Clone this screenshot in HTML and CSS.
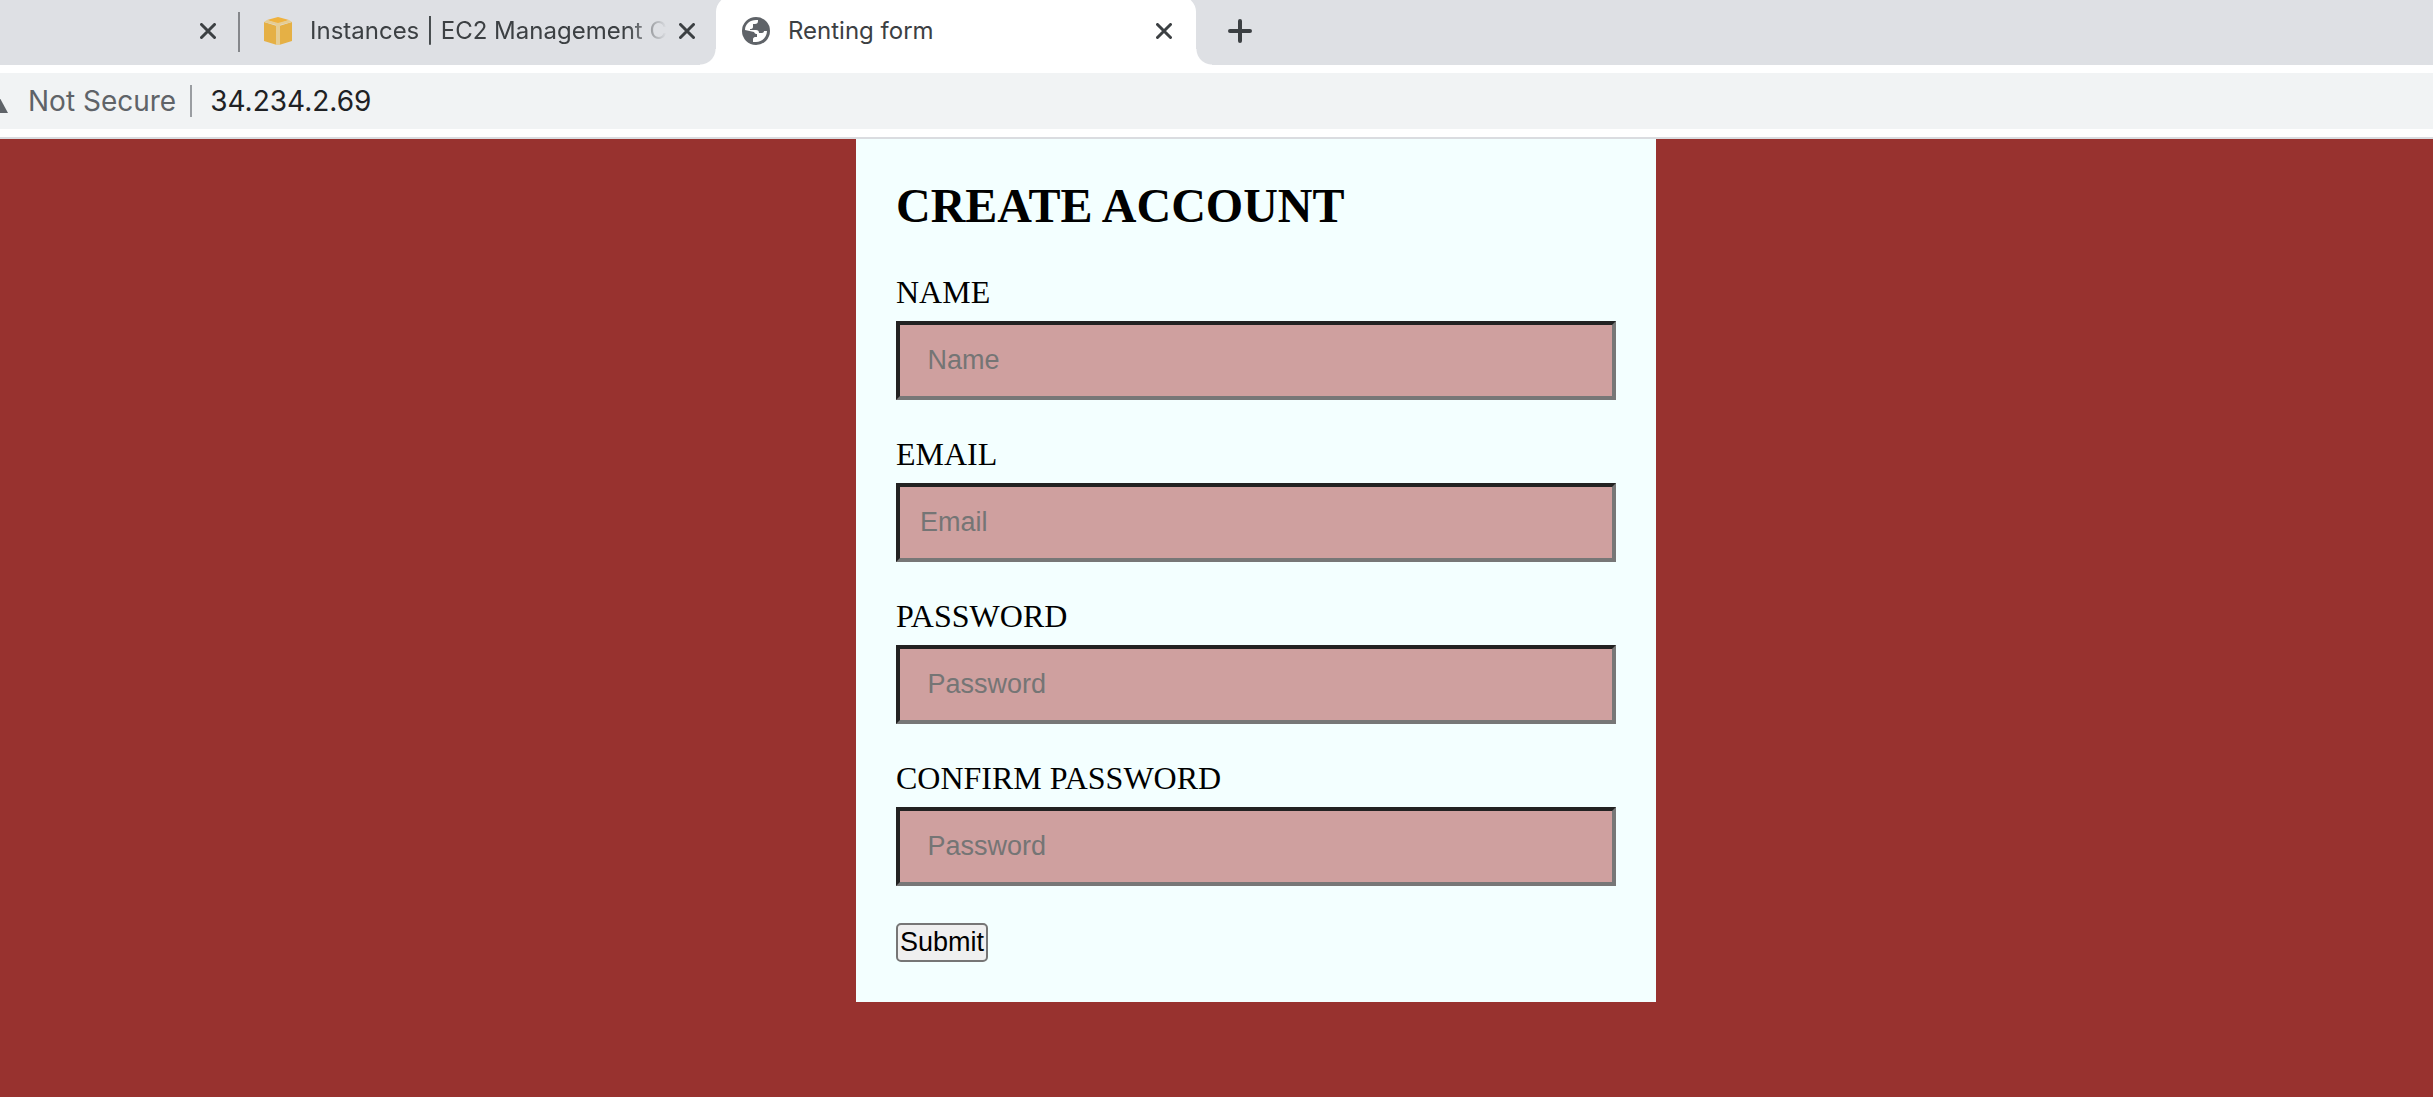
FILE: index.html
```html
<!DOCTYPE html>
<html lang="en">
<head>
<meta charset="utf-8">
<title>Renting form</title>
<link rel="stylesheet" href="styles.css">
</head>
<body>
<header class="browser">
  <nav class="tabs" aria-label="Tabs">
    <div class="tab tab-cut">
      <button class="icon-button" type="button" aria-label="Close tab"><svg class="close" viewBox="0 0 16 16"><path d="M1.5 1.5l13 13M14.5 1.5l-13 13"/></svg></button>
    </div>
    <div class="tab tab-divided">
      <svg class="favicon" viewBox="0 0 28 28"><path fill="#efb23e" d="M14 0l11 3-11 4L3 3z"/><path fill="#e5b045" d="M0 5l13 4v19L0 24zM28 5L15 9v19l13-4z"/><path fill="#e6cd93" d="M0 5l3-2 11 3 11-3 3 2-12 3v20h-4V8z"/></svg>
      <span class="tab-title tab-title-fade">Instances | EC2 Management C</span>
      <button class="icon-button" type="button" aria-label="Close tab"><svg class="close" viewBox="0 0 16 16"><path d="M1.5 1.5l13 13M14.5 1.5l-13 13"/></svg></button>
    </div>
    <div class="tab tab-active">
      <svg class="favicon" viewBox="0 0 28 28"><circle cx="14" cy="14" r="14" fill="#5f6368"/><path fill="#fff" d="M3 13C3 7 8 3 14 3h2v1c0 2-1 3-3 3h-2v3c0 1-1 2-2 2H8v1h6c2 0 3 1 3 3h3c1 0 2-1 2-2h3c0 6-5 11-11 11h-3v-3c0-1 1-2 2-2h2v-3c-1 0-2 0-3-2z"/></svg>
      <span class="tab-title">Renting form</span>
      <button class="icon-button" type="button" aria-label="Close tab"><svg class="close" viewBox="0 0 16 16"><path d="M1.5 1.5l13 13M14.5 1.5l-13 13"/></svg></button>
    </div>
    <button class="icon-button new-tab" type="button" aria-label="New tab"><svg class="plus" viewBox="0 0 24 24"><path d="M12 2v20M2 12h20"/></svg></button>
  </nav>
  <div class="toolbar">
    <div class="address">
      <svg class="warning" viewBox="0 0 8 28"><path d="M-5 2L8 26H-18z" fill="#5f6368"/></svg>
      <span class="security">Not Secure</span>
      <input class="url" type="text" aria-label="Address" value="34.234.2.69">
    </div>
  </div>
</header>
<main class="page">
  <form class="card">
    <h1 class="title">CREATE ACCOUNT</h1>
    <div class="field">
      <label class="label" for="name">NAME</label>
      <input class="box" id="name" type="text" placeholder="&nbsp;Name">
    </div>
    <div class="field">
      <label class="label" for="email">EMAIL</label>
      <input class="box" id="email" type="email" placeholder="Email">
    </div>
    <div class="field">
      <label class="label" for="password">PASSWORD</label>
      <input class="box" id="password" type="password" placeholder="&nbsp;Password">
    </div>
    <div class="field">
      <label class="label" for="confirm">CONFIRM PASSWORD</label>
      <input class="box" id="confirm" type="password" placeholder="&nbsp;Password">
    </div>
    <button class="submit" type="submit">Submit</button>
  </form>
</main>
</body>
</html>
```
FILE: styles.css
```css
* {
  box-sizing: border-box;
}

body {
  margin: 0;
  min-height: 100vh;
  background: #98322f;
  font-family: "Liberation Serif", serif;
  color: #000;
}

/* Browser window */
.browser {
  background: #fff;
  border-bottom: 2px solid #dadce0;
  font-family: Inter, sans-serif;
}

.tabs {
  display: flex;
  height: 65px;
  overflow: hidden;
  background: #dee0e4;
}

.tab {
  display: flex;
  align-items: center;
  flex: none;
  padding-bottom: 3px;
  color: #3c4043;
}

.tab-cut {
  width: 238px;
  justify-content: flex-end;
  padding-right: 22px;
}

.tab-divided {
  width: 478px;
  padding-left: 26px;
  padding-right: 22px;
  background: linear-gradient(#85878b, #85878b) no-repeat 0 12px / 2px 40px;
}

.tab-active {
  position: relative;
  width: 480px;
  margin-top: -4px;
  padding: 4px 24px 3px 26px;
  border-radius: 16px 16px 0 0;
  background: #fff;
}

/* Flared feet of the selected tab */
.tab-active::before,
.tab-active::after {
  content: "";
  position: absolute;
  bottom: 0;
  width: 16px;
  height: 16px;
}

.tab-active::before {
  right: 100%;
  background: radial-gradient(circle at 0 0, transparent 15px, #fff 16px);
}

.tab-active::after {
  left: 100%;
  background: radial-gradient(circle at 100% 0, transparent 15px, #fff 16px);
}

.favicon {
  flex: none;
  width: 28px;
  height: 28px;
}

.tab-title {
  flex: 1;
  margin: 0 12px 0 18px;
  white-space: nowrap;
  font-size: 24px;
  line-height: 32px;
}

.tab-title-fade {
  -webkit-mask-image: linear-gradient(to left, transparent, #000 40px);
  mask-image: linear-gradient(to left, transparent, #000 40px);
}

.icon-button {
  display: flex;
  flex: none;
  padding: 0;
  border: 0;
  background: none;
}

.close {
  width: 16px;
  height: 16px;
  fill: none;
  stroke: #3c4043;
  stroke-width: 3;
  stroke-linecap: round;
}

.new-tab {
  align-items: center;
  margin-left: 32px;
  padding-bottom: 3px;
}

.plus {
  width: 24px;
  height: 24px;
  fill: none;
  stroke: #3c4043;
  stroke-width: 4;
  stroke-linecap: round;
}

.toolbar {
  padding: 8px 0;
}

.address {
  display: flex;
  align-items: center;
  height: 56px;
  background: #f1f3f4;
  font-size: 28px;
  line-height: 32px;
}

.warning {
  width: 8px;
  height: 28px;
  margin-right: 20px;
}

.security {
  padding-right: 14px;
  color: #5f6368;
}

.url {
  flex: 1;
  height: 32px;
  padding: 0 0 0 18px;
  border: 0;
  border-left: 2px solid #9a9da1;
  background: none;
  font: inherit;
  color: #202124;
}

/* Page; the left part of the window lies beyond the edge */
.page {
  padding-left: 79px;
}

.card {
  max-width: 800px;
  margin: 0 auto;
  padding: 40px;
  background: #f3ffff;
}

.title {
  margin: 0 0 42px;
  font-size: 48px;
  line-height: 54px;
}

.field {
  margin-bottom: 37px;
}

.label {
  display: block;
  margin-bottom: 12px;
  font-size: 32px;
  line-height: 34px;
}

.box {
  display: block;
  width: 100%;
  height: 79px;
  padding: 20px;
  border: 4px solid;
  border-color: #222 #777 #777 #222;
  border-radius: 0;
  background: #cfa09f;
  font-family: "Liberation Sans", sans-serif;
  font-size: 27px;
}

.box::placeholder {
  color: #757575;
}

.submit {
  display: block;
  padding: 2px;
  border: 2px solid #767676;
  border-radius: 5px;
  background: #efefef;
  font-family: "Liberation Sans", sans-serif;
  font-size: 27px;
  line-height: 31px;
  color: #000;
}
```
